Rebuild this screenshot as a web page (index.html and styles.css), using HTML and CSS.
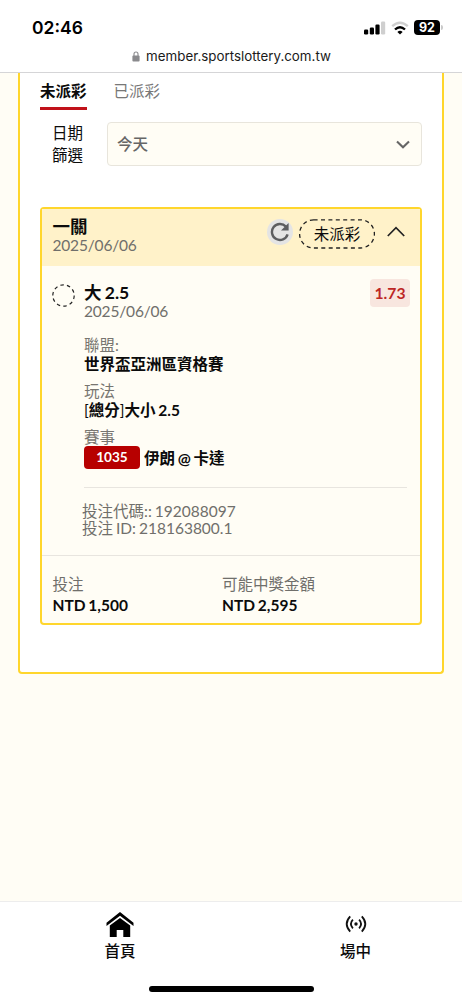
FILE: index.html
```html
<!DOCTYPE html>
<html lang="zh-Hant">
<head>
<meta charset="utf-8">
<meta name="viewport" content="width=device-width">
<title>投注紀錄</title>
<link rel="stylesheet" href="styles.css">
</head>
<body>
<header class="browser">
  <div class="status">
    <span class="clock">02:46</span>
    <div class="indicators">
      <svg class="signal" width="22" height="14" viewBox="0 0 22 14"><rect x="0" y="8.5" width="4.2" height="5" rx="1.2"/><rect x="5.8" y="6.5" width="4.2" height="7" rx="1.2"/><rect x="11.4" y="3.5" width="4.2" height="10" rx="1.2"/><rect x="17" y="0.5" width="4.2" height="13" rx="1.2" fill="#cfcfcf"/></svg>
      <svg class="wifi" width="18" height="14" viewBox="0 0 18 14" fill="none" stroke-width="2.4"><path d="M1.2 5.2Q9-1.9 16.8 5.2" stroke="#cfcfcf"/><path d="M4 8.5Q9 3.8 14 8.5" stroke="#000"/><path d="M6.4 10.9Q9 8.7 11.6 10.9L9 13.5Z" fill="#000"/></svg>
      <div class="battery"><span class="level">92</span><i class="cap"></i></div>
    </div>
  </div>
  <div class="address">
    <svg width="8" height="11" viewBox="0 0 8 11"><path d="M2 5V3a2 2 0 0 1 4 0v2" fill="none" stroke="#8a8a8d" stroke-width="1.1"/><rect x="0.4" y="4.6" width="7.2" height="6" rx="1" fill="#8a8a8d"/></svg>
    <span>member.sportslottery.com.tw</span>
  </div>
</header>
<main class="page">
  <section class="panel">
    <nav class="tabs"><a class="tab active">未派彩</a><a class="tab">已派彩</a></nav>
    <div class="filter">
      <div class="filter-label">日期<br>篩選</div>
      <div class="select"><span>今天</span><svg width="14" height="9" viewBox="0 0 14 9"><path d="M1 1.4 7 7.2 13 1.4" fill="none" stroke="#666" stroke-width="2.1"/></svg></div>
    </div>
    <article class="card">
      <div class="card-head">
        <div class="head-title"><div class="title">一關</div><div class="date">2025/06/06</div></div>
        <div class="head-actions">
          <span class="refresh"><svg width="20" height="20" viewBox="0 0 20 20"><path d="M17.6 12.4A8 8 0 1 1 15.9 4.6" fill="none" stroke="#5d5e60" stroke-width="2.4"/><path d="M18.6 1v7.6H11z" fill="#5d5e60"/></svg></span>
          <span class="state"><svg class="outline" width="76" height="30" viewBox="0 0 76 30"><rect x=".6" y=".8" width="74.8" height="28.2" rx="14" fill="none" stroke="#222" stroke-width="1.3" stroke-dasharray="4 3.4"/></svg>未派彩</span>
          <svg class="chevron" width="18" height="11" viewBox="0 0 18 11"><path d="M.8 10 9 1.6 17.2 10" fill="none" stroke="#222" stroke-width="1.7"/></svg>
        </div>
      </div>
      <div class="bet">
        <svg class="pending" width="23" height="23" viewBox="0 0 23 23"><circle cx="11.5" cy="11.5" r="10.7" fill="none" stroke="#222" stroke-width="1.2" stroke-dasharray="3.5 3.2"/></svg>
        <div class="bet-body">
          <div class="bet-top">
            <div><div class="pick">大 2.5</div><div class="date">2025/06/06</div></div>
            <span class="odds">1.73</span>
          </div>
          <dl class="facts">
            <dt>聯盟:</dt><dd>世界盃亞洲區資格賽</dd>
            <dt>玩法</dt><dd><span class="bracket">[</span>總分<span class="bracket">]</span>大小 2.5</dd>
            <dt>賽事</dt><dd class="match"><span class="code">1035</span><span>伊朗 @ 卡達</span></dd>
          </dl>
          <div class="ids"><div>投注代碼:: 192088097</div><div>投注 ID: 218163800.1</div></div>
        </div>
      </div>
      <div class="totals">
        <div><div class="label">投注</div><div class="amount">NTD 1,500</div></div>
        <div><div class="label">可能中獎金額</div><div class="amount">NTD 2,595</div></div>
      </div>
    </article>
  </section>
</main>
<footer class="bottom">
  <nav class="bottom-nav">
    <a class="item home"><svg width="28" height="26" viewBox="0 0 28 26"><path d="M14 0 27.5 10.8V14L14 3.8.5 14V10.8Z"/><path d="M14 5.9 24.2 13.6V25H17.3V18H10.7V25H3.8V13.6Z"/></svg><span>首頁</span></a>
    <a class="item live"><svg width="22" height="26" viewBox="0 0 22 26" fill="none" stroke="#111" stroke-width="1.8"><circle cx="11" cy="12" r="1.7" fill="#111" stroke="none"/><path d="M7.9 7.7q-4 4.3 0 8.6M14.1 7.7q4 4.3 0 8.6M5.2 4.4q-7 7.6 0 15.2M16.8 4.4q7 7.6 0 15.2"/></svg><span>場中</span></a>
  </nav>
  <div class="home-bar"></div>
</footer>
</body>
</html>
```
FILE: styles.css
```css
* { box-sizing: border-box; }
body { margin: 0; width: 462px; height: 1000px; overflow: hidden; display: flex; flex-direction: column; background: #fffdf5; color: #0b0b0b; font: 15.5px/18px Lato, "Noto Sans CJK TC", sans-serif; }
svg { display: block; flex: none; }
.browser { height: 73px; flex: none; background: #fff; border-bottom: 1px solid #d5d5d7; font-family: Inter, sans-serif; }
.status { height: 44px; padding: 12px 19px 0 32px; display: flex; justify-content: space-between; }
.clock { font-size: 17.5px; line-height: 32px; font-weight: 600; color: #000; }
.indicators { display: flex; height: 31px; align-items: center; }
.wifi { margin: 0 5px 0 5px; }
.battery { display: flex; align-items: center; gap: 1px; }
.level { width: 26px; height: 15px; border-radius: 4px; background: #000; color: #fff; font-size: 12.5px; font-weight: 700; line-height: 15px; text-align: center; }
.cap { width: 2px; height: 5px; border-radius: 0 2px 2px 0; background: #c9c9c9; }
.address { display: flex; justify-content: center; align-items: center; gap: 6px; height: 24px; padding-left: 1px; font-size: 13.35px; color: #1a1a1a; }
.page { flex: 1; padding: 0 18px; }
.panel { height: 601px; padding: 0 20px; background: #fff; border: 2px solid #ffd62c; border-top: 0; border-radius: 0 0 4px 4px; }
.tabs { display: flex; gap: 27px; }
.tab { height: 37px; padding-top: 9px; color: #777; }
.tab.active { color: #0b0b0b; font-weight: 700; border-bottom: 3px solid #c1121a; }
.filter { display: flex; margin-top: 12px; height: 44px; }
.filter-label { width: 67px; padding-left: 12px; line-height: 22px; }
.select { flex: 1; padding: 0 11px 0 9px; display: flex; justify-content: space-between; align-items: center; border: 1px solid #e8e5dc; border-radius: 4px; background: #fffdf5; color: #666; font-weight: 500; }
.card { margin-top: 41px; height: 418px; border: 2px solid #ffd62c; border-radius: 4px; background: #fffdf5; word-spacing: -1px; }
.card-head { height: 57px; padding: 9px 15px 0 10.5px; display: flex; justify-content: space-between; background: #fff2c9; }
.title, .pick { font-size: 17.5px; font-weight: 700; line-height: 18px; }
.date { color: #706f6b; line-height: 19px; letter-spacing: -.18px; }
.head-actions { display: flex; height: 30px; align-items: center; }
.refresh { width: 26px; height: 26px; border-radius: 50%; background: #e4e4e4; display: grid; place-items: center; margin: -3px 6px 0 0; }
.state { position: relative; width: 76px; height: 30px; margin-top: 1px; line-height: 30px; text-align: center; }
.outline { position: absolute; left: 0; top: 0; }
.chevron { margin: -4px 0 0 12px; }
.bet { height: 289px; padding: 18px 11px 0 10px; display: flex; gap: 9px; }
.bet-body { flex: 1; }
.bet-top { height: 52px; display: flex; justify-content: space-between; }
.odds { width: 40px; height: 28px; margin: -5px -1px 0 0; border-radius: 4px; background: #f8e6df; color: #bd2626; font-weight: 700; font-size: 15.7px; line-height: 28px; text-align: center; }
.facts { margin: 0; }
.facts dt { color: #777570; line-height: 18px; }
.facts dd { margin: 0 0 8px; line-height: 20px; font-weight: 700; }
.bracket { font-weight: 400; }
.facts .match { display: flex; align-items: center; gap: 4px; height: 23px; margin: 0 0 18px; }
.code { width: 56px; height: 23px; border-radius: 4px; background: #b70000; color: #fff; font-size: 13.6px; line-height: 23px; text-align: center; }
.ids { margin: 0 2px 0 0; border-top: 1px solid #e8e5df; padding-top: 15px; color: #706f6b; line-height: 17px; }
.ids div { margin-left: -2px; }
.totals { border-top: 1px solid #e8e5df; padding: 19px 10.5px 0; display: grid; grid-template-columns: 169.5px 1fr; }
.label { color: #706f6b; line-height: 18px; }
.amount { font-weight: 700; line-height: 24px; }
.bottom { height: 99px; flex: none; border-top: 1px solid #ededed; background: #fff; }
.bottom-nav { height: 83.5px; display: grid; grid-template-columns: 240px 231px; }
.item { display: flex; flex-direction: column; align-items: center; padding-top: 10px; gap: 4px; font-weight: 500; }
.home-bar { width: 165px; height: 6px; margin: 0 auto; border-radius: 3px; background: #000; }
```
